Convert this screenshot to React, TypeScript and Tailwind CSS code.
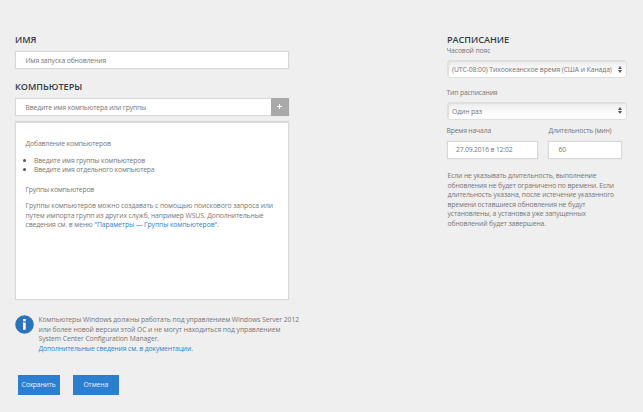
import type { ReactNode } from "react";

function Heading({ children }: { children: ReactNode }) {
  return <h2 className="h-3 text-[9.1px] leading-3 font-semibold tracking-normal whitespace-nowrap text-[#323c4c]">{children}</h2>;
}

function Select({ children }: { children: ReactNode }) {
  return (
    <div className="flex h-[18px] w-[180px] items-center justify-between rounded-[3px] border border-[#dfdfdf] bg-linear-to-b from-[#ededed] to-white to-80% pr-1 pl-1 shadow-[inset_1px_1px_1px_#dedede]">
      <span className="pt-[1.5px] whitespace-nowrap">{children}</span>
      <svg width="4" height="7" viewBox="0 0 4 7" fill="#555">
        <path d="M2 0 4 3H0zM2 7 0 4h4z" />
      </svg>
    </div>
  );
}

export default function App() {
  return (
    <main className="flex h-[412px] w-[643px] bg-[#efefef] pt-[34px] pl-[15px] font-['Open_Sans','Noto_Sans',sans-serif] text-[6.8px] leading-[9.6px] tracking-[-0.12px] text-[#777]">
      <section className="w-[432px]">
        <Heading>ИМЯ</Heading>
        <div className="mt-[5px] flex h-[18px] w-[274px] items-center border border-[#d6d8d8] bg-white pt-[1.5px] pl-[9.5px] shadow-[0_0_1px_#dcdcdc]">Имя запуска обновления</div>
        <div className="mt-3">
          <Heading>КОМПЬЮТЕРЫ</Heading>
        </div>
        <div className="mt-[5px] flex h-[18px] w-[274px] shadow-[0_0_1px_#dcdcdc]">
          <div className="flex flex-1 items-center border border-r-0 border-[#d6d8d8] bg-white pt-[1.5px] pl-[9.5px] tracking-[-0.15px]">Введите имя компьютера или группы</div>
          <button className="flex w-[18px] items-start bg-[#a9a9a9] pt-[6px] pl-[6px]">
            <svg width="5" height="5" viewBox="0 0 5 5" stroke="white">
              <path d="M2.5 0v5M0 2.5h5" />
            </svg>
          </button>
        </div>
        <div className="mt-[5px] h-[179px] w-[274px] border border-t-2 border-[#d9dbdb] bg-white pt-[16px] pl-[9.5px] shadow-[0_0_1px_#dcdcdc]">
          <p>Добавление компьютеров</p>
          <ul className="mt-[7px] -ml-[2.5px] leading-[9px] tracking-[-0.15px]">
            <li className="flex items-center gap-[8px]"><i className="size-[3px] rounded-full bg-[#555]" />Введите имя группы компьютеров</li>
            <li className="flex items-center gap-[8px]"><i className="size-[3px] rounded-full bg-[#555]" />Введите имя отдельного компьютера</li>
          </ul>
          <p className="mt-[11px] tracking-[-0.2px]">Группы компьютеров</p>
          <div className="mt-[7px] tracking-[-0.1px] whitespace-nowrap">
            <p>Группы компьютеров можно создавать с помощью поискового запроса или</p>
            <p>путем импорта групп из других служб, например WSUS. Дополнительные</p>
            <p>сведения см. в меню <a className="text-[#2f82cc]">"Параметры — Группы компьютеров"</a>.</p>
          </div>
        </div>
        <div className="mt-[15px] flex gap-[4.5px]">
          <svg className="shrink-0" width="19" height="19" viewBox="0 0 19 19">
            <circle cx="9.5" cy="9.5" r="9.3" fill="#2d73b9" />
            <path d="M8.1 4.1h2.6v2.1H8.1zM7.7 7.4h3v7.3H8.1V8.6h-.4z" fill="white" />
          </svg>
          <div className="tracking-[-0.06px] whitespace-nowrap">
            <p>Компьютеры Windows должны работать под управлением Windows Server 2012</p>
            <p className="tracking-[-0.07px]">или более новой версии этой ОС и не могут находиться под управлением</p>
            <p>System Center Configuration Manager.</p>
            <p className="tracking-[-0.12px] text-[#2f82cc]">Дополнительные сведения см. в документации.</p>
          </div>
        </div>
        <div className="mt-[21.6px] ml-[2.5px] flex gap-[13px] text-[#e8f2fb]">
          <button className="h-5 w-[42px] bg-[#2a7fd0] tracking-[-0.2px]">Сохранить</button>
          <button className="h-5 w-[46.5px] bg-[#2a7fd0]">Отмена</button>
        </div>
      </section>
      <section className="w-[180px] whitespace-nowrap">
        <Heading>РАСПИСАНИЕ</Heading>
        <p className="-ml-[0.5px] h-[14px]">Часовой пояс</p>
        <div className="tracking-[-0.08px]">
          <Select>(UTC-08:00) Тихоокеанское время (США и Канада)</Select>
        </div>
        <p className="mt-[10px] mb-[4.4px] -ml-[0.5px] tracking-[-0.16px]">Тип расписания</p>
        <Select>Один раз</Select>
        <div className="mt-[6px] flex gap-[10px]">
          <label className="w-[90.5px] tracking-[-0.17px]">
            <span className="-ml-[0.5px]">Время начала</span>
            <span className="mt-[5.4px] flex h-[18px] items-center border border-[#d6d8d8] bg-white pl-2 shadow-[0_0_1px_#dcdcdc]">27.09.2016 в 12:02</span>
          </label>
          <label className="w-[74px] tracking-[-0.17px]">
            <span className="pl-[1px]">Длительность (мин)</span>
            <span className="mt-[5.4px] flex h-[18px] items-center border border-[#d6d8d8] bg-white pl-[10px] shadow-[0_0_1px_#dcdcdc]">60</span>
          </label>
        </div>
        <div className="mt-3 ml-[0.5px]">
          <p>Если не указывать длительность, выполнение</p>
          <p>обновления не будет ограничено по времени. Если</p>
          <p>длительность указана, после истечение указанного</p>
          <p>времени оставшиеся обновления не будут</p>
          <p>установлены, а установка уже запущенных</p>
          <p>обновлений будет завершена.</p>
        </div>
      </section>
    </main>
  );
}
